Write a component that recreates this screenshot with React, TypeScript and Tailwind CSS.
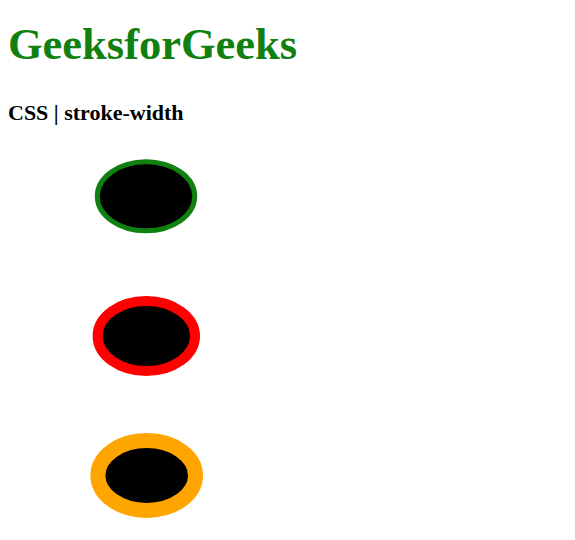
export default function App() {
  return (
    <div className="w-[575px] h-[540px] bg-white overflow-hidden" style={{ fontFamily: '"Liberation Serif", "Times New Roman", serif' }}>
      <div className="pl-[8px] pt-[19px]">
        <h1 className="text-[44.5px] leading-[51px] font-bold text-[#108010]">GeeksforGeeks</h1>
        <div className="mt-[30px] text-[22px] leading-[25px] font-bold text-black">CSS | stroke-width</div>
      </div>
      <svg width="575" height="410" className="block">
        <ellipse cx="146" cy="71.3" rx="48.7" ry="34.5" fill="black" stroke="#108010" strokeWidth="5" />
        <ellipse cx="146.3" cy="211" rx="48.7" ry="35" fill="black" stroke="red" strokeWidth="10" />
        <ellipse cx="146.7" cy="350.5" rx="48.8" ry="34.9" fill="black" stroke="orange" strokeWidth="15" />
      </svg>
    </div>
  );
}
